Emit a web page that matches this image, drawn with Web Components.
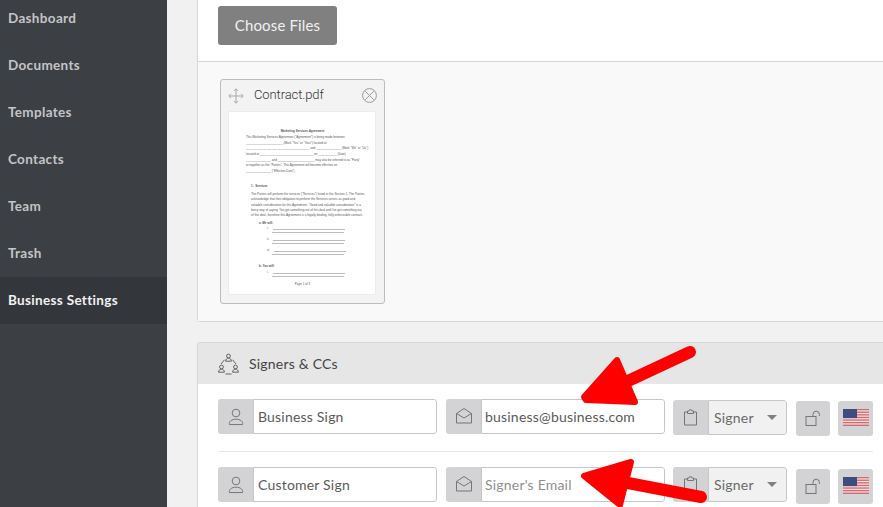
<!DOCTYPE html>
<html lang="en">
<head>
<meta charset="utf-8">
<title>Business Settings</title>
<style>
html,body{margin:0;padding:0;height:100%;overflow:hidden;background:#f1f1f1;font-family:Lato,"Liberation Sans",sans-serif}
</style>
</head>
<body>
<app-shell>
  <side-nav slot="nav">
    <nav-item>Dashboard</nav-item>
    <nav-item>Documents</nav-item>
    <nav-item>Templates</nav-item>
    <nav-item>Contacts</nav-item>
    <nav-item>Team</nav-item>
    <nav-item>Trash</nav-item>
    <nav-item active>Business Settings</nav-item>
  </side-nav>
  <upload-card>
    <file-card name="Contract.pdf"><doc-thumb></doc-thumb></file-card>
  </upload-card>
  <signers-card>
    <signer-row name="Business Sign" email="business@business.com" first></signer-row>
    <signer-row name="Customer Sign" placeholder="Signer's Email"></signer-row>
  </signers-card>
  <svg slot="overlay" width="883" height="507" viewBox="0 0 883 507" aria-hidden="true">
    <g fill="#fe0000" stroke="#fe0000" stroke-linejoin="round">
      <path d="M690 352 L628 381" stroke-width="12" stroke-linecap="round" fill="none"/>
      <path d="M617 360 L584 397 L586 400 L635 402 Z" stroke-width="6"/>
      <path d="M701 497 L628 483" stroke-width="12" stroke-linecap="round" fill="none"/>
      <path d="M631 462 L584 476 L620 505 Z" stroke-width="6"/>
    </g>
  </svg>
</app-shell>
<script>
function define(name, css, html){
  class C extends HTMLElement{
    constructor(){super();this.attachShadow({mode:'open'});}
    connectedCallback(){
      const h = typeof html==='function'?html(this):html;
      this.shadowRoot.innerHTML='<style>'+css+'</style>'+h;
    }
  }
  customElements.define(name,C);
}
const SANS='Lato,"Liberation Sans",sans-serif';
const ICON={
 person:'<svg width="16" height="18" viewBox="0 0 18 20" fill="none" stroke="#757577" stroke-width="1.1"><circle cx="9" cy="5.5" r="4.3"/><path d="M1.5 18.5h15c.4-3.5-2.5-6-7.500-6s-7.900 2.500-7.500 6z"/></svg>',
 mail:'<svg style="margin-bottom:3px" width="18" height="17" viewBox="0 0 18 17" fill="none" stroke="#757577" stroke-width="1" stroke-linejoin="round"><path d="M1.500 6.500 9 1.500l7.500 5v9.500h-15z"/><path d="M1.500 6.500 9 11l7.500-4.500"/></svg>',
 clip:'<svg width="15" height="17" viewBox="0 0 15 17" fill="none" stroke="#757577" stroke-width="1" stroke-linejoin="round"><path d="M4.500 3H1.500v13h12V3h-3"/><path d="M4.500 4.500V2H6l.5-1.200h2L9 2h1.500v2.500z"/></svg>',
 lock:'<svg width="17" height="18" viewBox="0 0 17 18" fill="none" stroke="#757577" stroke-width="1"><rect x="1" y="6.500" width="10" height="9"/><path d="M8 6.500V4.400a3.200 3.200 0 0 1 6.400 0V6"/></svg>',
 flag:'<svg style="margin-bottom:2px" width="26" height="17" viewBox="0 0 26 17"><rect width="26" height="17" fill="#f4dcdc"/><g fill="#cf6b72"><rect y="0" width="26" height="1.300"/><rect y="2.600" width="26" height="1.300"/><rect y="5.200" width="26" height="1.300"/><rect y="7.800" width="26" height="1.300"/><rect y="10.400" width="26" height="1.300"/><rect y="13" width="26" height="1.300"/><rect y="15.600" width="26" height="1.400"/></g><rect width="14" height="9.100" fill="#3f4c80"/></svg>',
 move:'<svg width="16" height="16" viewBox="0 0 16 16" fill="none" stroke="#a9a9a9" stroke-width="1"><path d="M8 .8v14.400M.8 8h14.400M5.800 3 8 .8 10.200 3M5.800 13 8 15.200 10.200 13M3 5.800.8 8 3 10.200M13 5.800 15.200 8 13 10.200"/></svg>',
 close:'<svg width="15" height="15" viewBox="0 0 15 15" fill="none" stroke="#9a9a9a" stroke-width="1"><circle cx="7.500" cy="7.500" r="6.900"/><path d="M3.200 3.200l8.600 8.600M11.800 3.200l-8.600 8.600"/></svg>',
 group:'<svg width="21" height="22" viewBox="0 0 21 22" fill="none" stroke="#555" stroke-width=".9"><circle cx="10.500" cy="3" r="1.900"/><path d="M7.600 8.200c.1-2 1.300-3 2.900-3s2.800 1 2.900 3z"/><circle cx="3.500" cy="14" r="1.900"/><path d="M.6 19.200c.1-2 1.300-3 2.900-3s2.800 1 2.900 3z"/><circle cx="17.500" cy="14" r="1.900"/><path d="M14.600 19.200c.1-2 1.300-3 2.900-3s2.800 1 2.900 3z"/><path d="M6.500 6.800 3 11M14.500 6.800 18 11M7.500 21h6"/></svg>'
};

define('app-shell',`
  :host{display:block;position:relative;width:883px;height:507px;overflow:hidden}
  .g{display:grid;grid-template-columns:167px 1fr;height:507px}
  main{padding-left:30px;min-width:0;overflow:hidden;background:#f1f1f1}
  .o{position:absolute;inset:0;pointer-events:none}
`,`<div class="g"><slot name="nav"></slot><main><slot></slot></main></div><div class="o"><slot name="overlay"></slot></div>`);

define('side-nav',`
  :host{display:block;background:#3c3f44;height:507px;overflow:hidden}
  .l{display:flex;flex-direction:column;margin-top:-5px}
`,`<div class="l"><slot></slot></div>`);

define('nav-item',`
  :host{display:flex;align-items:center;height:47px;padding-left:8px;font:700 13.500px/1 ${SANS};letter-spacing:.33px;color:#c4c5c7;box-sizing:border-box}
  :host([active]){background:#33363a;color:#f2f2f2}
`,`<slot></slot>`);

define('upload-card',`
  :host{display:block;width:720px;background:#fff;border:1px solid #d6d6d6;border-top:0;border-right:0;border-radius:0 0 0 3px;box-sizing:border-box}
  .top{height:62px;box-sizing:border-box;padding:6px 0 0 20px;border-bottom:1px solid #d6d6d6}
  .btn{display:flex;align-items:center;justify-content:center;width:119px;height:39px;background:#808080;color:#f0f0f0;border-radius:3px;font:400 15px/1 ${SANS};letter-spacing:.15px}
  .bot{background:#f9f9f9;height:259px;box-sizing:border-box;padding:17px 0 0 22px}
`,`<div class="top"><div class="btn">Choose Files</div></div><div class="bot"><slot></slot></div>`);

define('file-card',`
  :host{display:block;width:165px;height:225px;box-sizing:border-box;background:#f3f3f3;border:1px solid #bcbcbc;border-radius:3px;padding:0 7px}
  .h{display:flex;align-items:center;height:31px;color:#333;font:300 13px/1 Roboto,"Liberation Sans",sans-serif;letter-spacing:-.1px}
  .n{margin-left:10px;flex:1;padding-bottom:2px}
  .h svg{display:block;flex:none}
`,(e)=>`<div class="h"><span>${ICON.move}</span><span class="n">${e.getAttribute('name')}</span><span>${ICON.close}</span></div><slot></slot>`);

define('doc-thumb',`
  :host{display:block;width:148px;height:184px;box-sizing:border-box;background:#fff;border:1px solid #ececec;border-radius:2px;padding:16.500px 0 0 17px;overflow:hidden;color:#555;font:3px/5.650px "Liberation Sans",sans-serif;white-space:nowrap}
  div{height:5.650px}
  .c{text-align:center;width:113px;font-weight:700}
  .s{margin-left:5px;font-weight:700}
  .i{margin-left:5px;font-size:3.050px;height:5.350px;line-height:5.350px}
  .a{margin-left:13px;font-weight:700}
  .r{display:flex;align-items:center;margin-left:21px;height:5.500px}
  .r i{display:block;width:72px;height:1px;background:#bdbdbd;margin-left:4px}
  .u{display:block;width:72px;height:1px;background:#bdbdbd;margin:0 0 4.500px 26px}
  .gap{height:9px}
  .p{text-align:center;width:113px;margin-top:3px}
`,`<div class="c">Marketing Services Agreement</div>
<div style="margin-top:1px">This Marketing Services Agreement ("Agreement") is being made between</div>
<div>______________________ (Mark "You" or "Your") located at</div>
<div>______________________________________ and _______________ (Mark "We" or "Us")</div>
<div>located at ________________________________ on ___________ (Date)</div>
<div>_______________ and ______________________ may also be referred to as "Party"</div>
<div>or together as the "Parties". This Agreement will become effective on</div>
<div>_______________ ("Effective Date").</div>
<div class="gap"></div>
<div class="s">1. &nbsp;Services</div>
<div class="gap" style="height:2.700px"></div>
<div class="i">The Parties will perform the services ("Services") listed in this Section 1. The Parties</div>
<div class="i">acknowledge that their obligation to perform the Services serves as good and</div>
<div class="i">valuable consideration for this Agreement. "Good and valuable consideration" is a</div>
<div class="i">fancy way of saying: You get something out of this deal and I've got something out</div>
<div class="i">of this deal, therefore this Agreement is a legally binding, fully enforceable contract.</div>
<div class="a" style="margin-top:2px">a. Me will:</div>
<div class="r"><span>i.</span><i></i></div><span class="u"></span>
<div class="r"><span>ii.</span><i></i></div><span class="u"></span>
<div class="r"><span>iii.</span><i></i></div><span class="u"></span>
<div class="gap" style="height:4.300px"></div>
<div class="a">b. You will:</div>
<div class="r" style="margin-top:1.300px"><span>i.</span><i></i></div><span class="u"></span>
<div class="p">Page 1 of 3</div>`);

define('signers-card',`
  :host{display:block;width:720px;margin-top:20px;background:#fff;border:1px solid #d6d6d6;border-right:0;border-bottom:0;border-radius:3px 0 0 0;box-sizing:border-box}
  .h{display:flex;align-items:center;gap:10px;height:41px;padding-left:20px;background:#e6e6e6;color:#444;font:400 14px/1 ${SANS};letter-spacing:.2px}
  .h svg{display:block}
  .h span{padding-top:1px}
  .b{padding:15px 0 0 20px}
`,`<div class="h">${ICON.group}<span>Signers &amp; CCs</span></div><div class="b"><slot></slot></div>`);

define('signer-row',`
  :host{display:block;width:655px;padding-bottom:17px;margin-bottom:15px;border-bottom:1px solid #e6e6e6;font:400 14px/1 ${SANS};letter-spacing:.2px}
  .r{display:flex;align-items:flex-start;height:35px}
  .grp{display:flex;height:35px;box-sizing:border-box;border-radius:3px;overflow:hidden}
  .ad{display:flex;align-items:center;justify-content:center;width:35px;flex:none;background:#d3d3d5}
  .ad svg,.sq svg{display:block}
  .f{display:flex;align-items:center;box-sizing:border-box;border:1px solid #c6c6c6;border-radius:0 3px 3px 0;background:#fff;padding:1px 0 0 4px;color:#5a5a5a}
  .name .f{width:184px}
  .mail{margin-left:9px}
  .mail .f{width:184px;padding-left:3px}
  .ph{color:#8f8f8f}
  .role{margin-left:8px;margin-top:var(--o,0)}
  .role .f{width:79px;background:#f1f1f1;color:#6a6a6a;justify-content:space-between;padding:0 9px 0 5px}
  .car{width:0;height:0;border:5px solid transparent;border-top:5.500px solid #808080;border-bottom:0}
  .sq{display:flex;align-items:center;justify-content:center;height:35px;border-radius:3px;background:#d3d3d5;margin-top:2px}
  .lk{margin-left:9px;width:34px}
  .fl{margin-left:8px;width:35px}
`,(e)=>{
  const em=e.getAttribute('email');
  const first=e.hasAttribute('first');
  return `<div class="r" style="--o:${first?1:0}px">
  <div class="grp name"><div class="ad">${ICON.person}</div><div class="f">${e.getAttribute('name')}</div></div>
  <div class="grp mail"><div class="ad">${ICON.mail}</div><div class="f">${em?em:'<span class="ph">'+e.getAttribute('placeholder')+'</span>'}</div></div>
  <div class="grp role"><div class="ad">${ICON.clip}</div><div class="f"><span>Signer</span><span class="car"></span></div></div>
  <div class="sq lk">${ICON.lock}</div>
  <div class="sq fl">${ICON.flag}</div>
</div>`;});
</script>
</body>
</html>
